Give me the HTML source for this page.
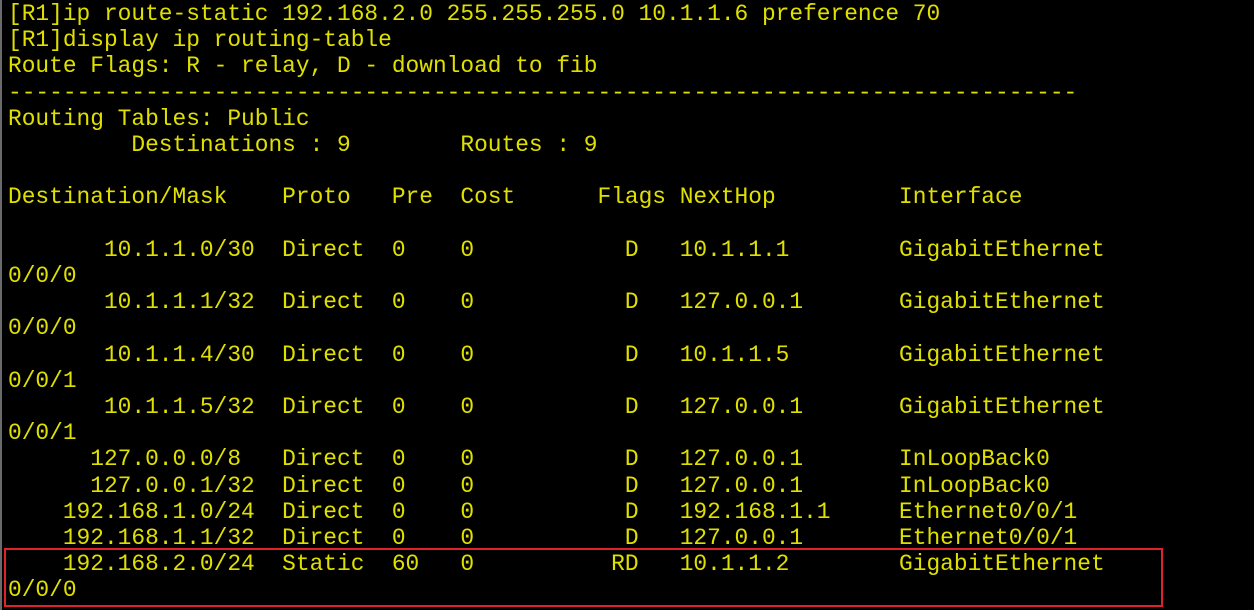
<!DOCTYPE html>
<html><head><meta charset="utf-8"><style>
html,body{margin:0;padding:0;background:#000;width:1254px;height:610px;overflow:hidden}
body{position:relative}
.lb{position:absolute;left:0;top:0;width:2px;height:610px;background:#6a6a6a}
pre{position:absolute;left:8px;top:1px;margin:0;font-family:"Liberation Mono",monospace;font-size:22.85px;line-height:26.2px;color:#e0e000;white-space:pre}
.box{position:absolute;left:4px;top:548px;width:1155px;height:55px;border:2px solid #e0202a}
</style></head><body>
<div class="lb"></div>
<pre>[R1]ip route-static 192.168.2.0 255.255.255.0 10.1.1.6 preference 70
[R1]display ip routing-table
Route Flags: R - relay, D - download to fib
------------------------------------------------------------------------------
Routing Tables: Public
         Destinations : 9        Routes : 9

Destination/Mask    Proto   Pre  Cost      Flags NextHop         Interface

       10.1.1.0/30  Direct  0    0           D   10.1.1.1        GigabitEthernet
0/0/0
       10.1.1.1/32  Direct  0    0           D   127.0.0.1       GigabitEthernet
0/0/0
       10.1.1.4/30  Direct  0    0           D   10.1.1.5        GigabitEthernet
0/0/1
       10.1.1.5/32  Direct  0    0           D   127.0.0.1       GigabitEthernet
0/0/1
      127.0.0.0/8   Direct  0    0           D   127.0.0.1       InLoopBack0
      127.0.0.1/32  Direct  0    0           D   127.0.0.1       InLoopBack0
    192.168.1.0/24  Direct  0    0           D   192.168.1.1     Ethernet0/0/1
    192.168.1.1/32  Direct  0    0           D   127.0.0.1       Ethernet0/0/1
    192.168.2.0/24  Static  60   0          RD   10.1.1.2        GigabitEthernet
0/0/0</pre>
<div class="box"></div>
</body></html>
